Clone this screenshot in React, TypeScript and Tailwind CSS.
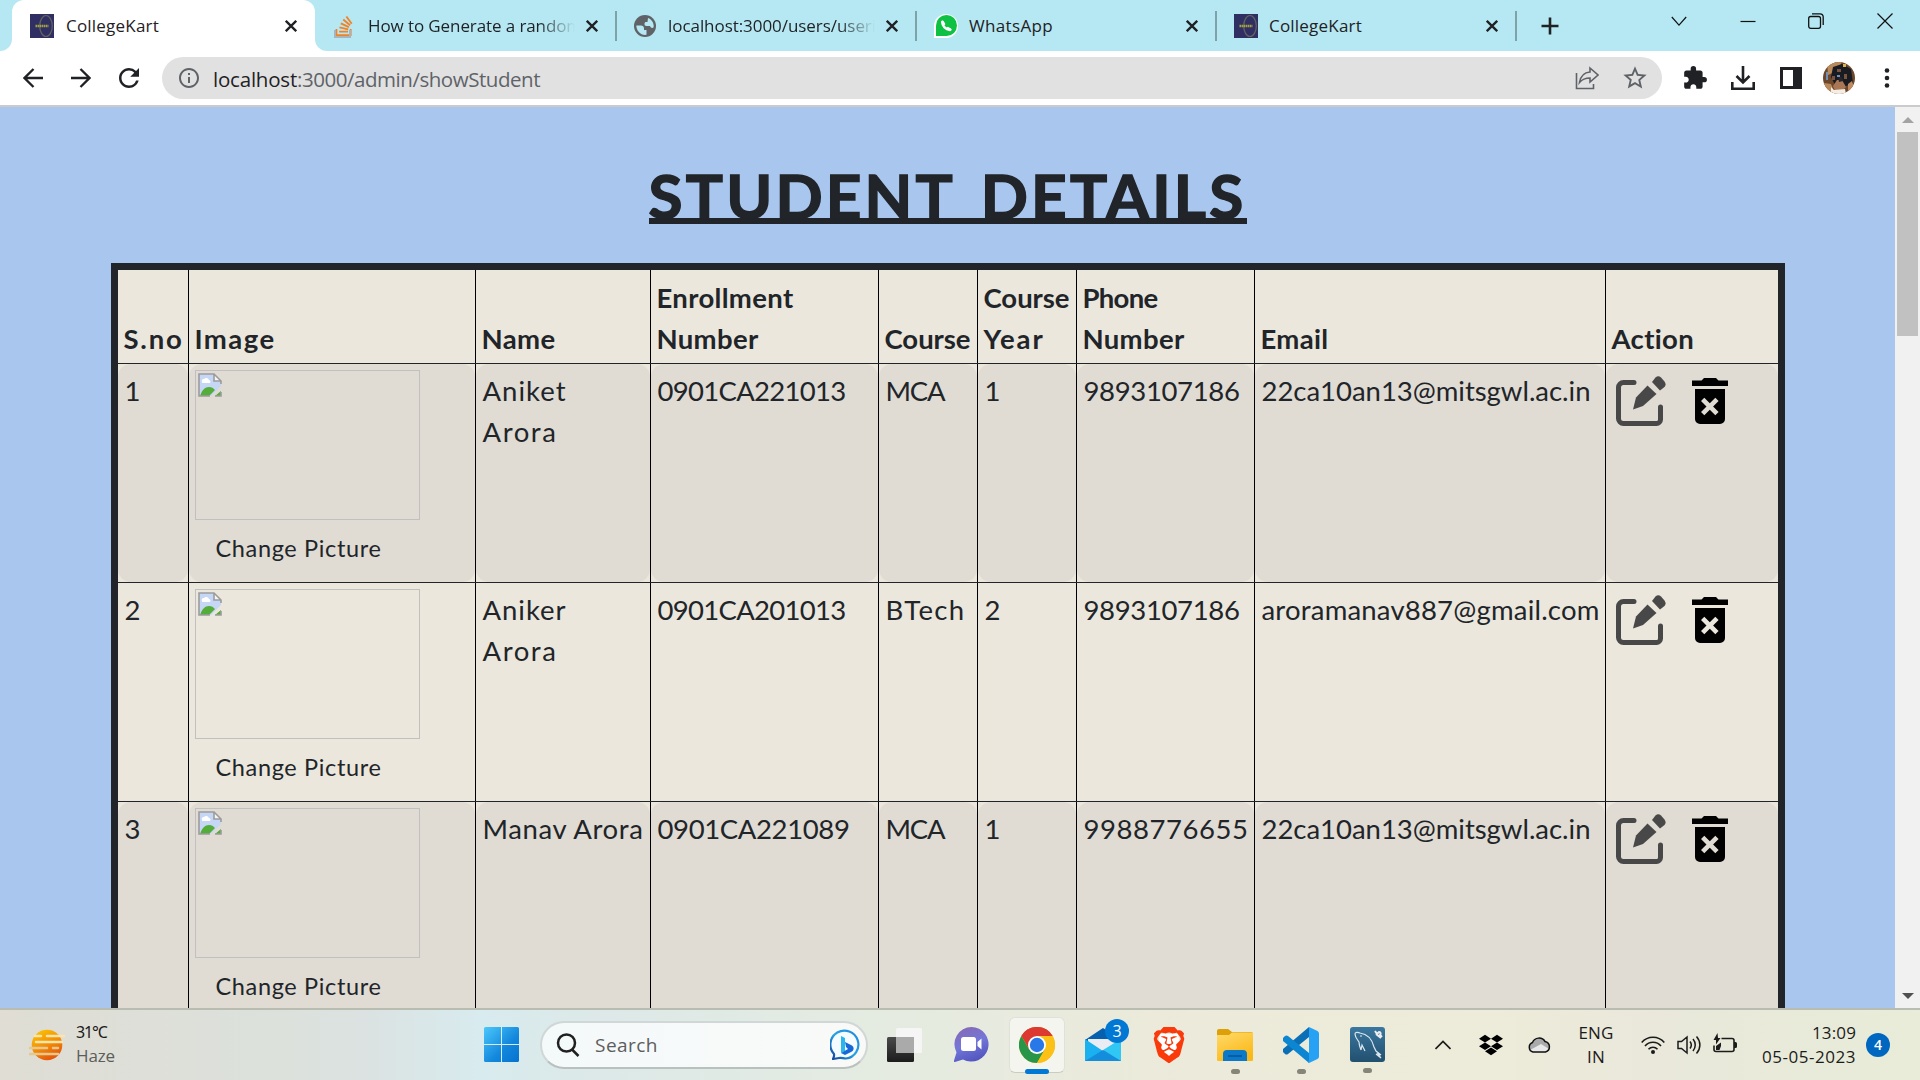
import { useLayoutEffect, useRef, useState } from "react";
import type { ReactNode } from "react";
import { SiBrave, SiDropbox, SiStackoverflow } from "react-icons/si";
import { FaWhatsapp } from "react-icons/fa";
import { MdExtension, MdInfoOutline, MdRefresh, MdStarBorder } from "react-icons/md";

/* Text whose letter spacing is adjusted so that the line has a given width. */
function Fit({ w, className = "", children }: { w: number; className?: string; children: ReactNode }) {
  const ref = useRef<HTMLSpanElement>(null);
  const [spacing, setSpacing] = useState(0);
  useLayoutEffect(() => {
    const el = ref.current;
    if (!el) return;
    el.style.letterSpacing = "0px";
    const natural = el.getBoundingClientRect().width;
    const count = (el.textContent || "x").length;
    const s = (w - natural) / count;
    el.style.letterSpacing = s + "px";
    setSpacing(s);
  }, [w]);
  return (
    <span ref={ref} className={"inline-block whitespace-pre " + className} style={{ letterSpacing: spacing }}>
      {children}
    </span>
  );
}

const Close = () => (
  <svg className="h-3 w-3 shrink-0" viewBox="0 0 12 12" stroke="#1f2124" strokeWidth="2.3">
    <path d="M.8.8 11.2 11.2M11.2.8.8 11.2" />
  </svg>
);

const KartIcon = () => (
  <svg className="h-6 w-6" viewBox="0 0 24 24">
    <rect width="24" height="24" fill="#2f2f63" />
    <ellipse cx="16" cy="12" rx="6.3" ry="10.5" fill="none" stroke="#65655f" strokeWidth="1.2" />
    <path d="M5.5 12h13" stroke="#a5a23e" strokeWidth="2.4" strokeDasharray="1.6 .5" />
  </svg>
);

const Globe = () => (
  <svg className="h-[22px] w-[22px]" viewBox="0 0 22 22">
    <circle cx="11" cy="11" r="11" fill="#5f6368" />
    <path d="M2.300 10.500h4.500c2 0 3.200 1 3.200 3v1.500h2.500v4.800c-5.500.8-10.200-3.800-10.200-9.300z" fill="#b5e8f2" />
    <path d="M14 2.900c3.500 1.300 5.700 4.600 5.700 8.100l-.2 1.500c-1 .8-3 .5-3.500-1.500h-3.500c-1.500 0-2-1-2-2.300 0-1.200.7-1.700 1.700-1.700h1.300z" fill="#b5e8f2" />
  </svg>
);

const WhatsApp = () => (
  <span className="flex h-6 w-6 items-center justify-center rounded-full rounded-bl-sm bg-white">
    <span className="flex h-[21px] w-[21px] items-center justify-center rounded-full rounded-bl-sm bg-[#0dc143]">
      <svg className="h-3 w-3" viewBox="0 0 12 12" fill="none" stroke="#fff" strokeWidth="2.600" strokeLinecap="round"><path d="M2.500 2c-.5 4 3.500 8 7.500 7.700" /><path d="m2.500 2 1.200 2M10 9.700 8 8.400" strokeWidth="3" /></svg>
    </span>
  </span>
);

const tabs = [
  { icon: <span className="relative block h-6 w-[20px]"><SiStackoverflow className="h-6 w-5 text-[#f48024]" /><span className="absolute bottom-0 left-0 h-[8px] w-[17px] border-2 border-t-0 border-[#a9b4ba]" /></span>, title: "How to Generate a random", w: 214, fade: true },
  { icon: <Globe />, title: "localhost:3000/users/useri", w: 208, fade: true },
  { icon: <WhatsApp />, title: "WhatsApp", w: 84, fade: false },
  { icon: <KartIcon />, title: "CollegeKart", w: 93, fade: false },
];

function TabStrip() {
  return (
    <div className="flex h-[51px] items-center bg-[#b5e8f2] text-[17px] text-[#1f2124]">
      <div className="flex h-full w-3 items-end">
        <div className="h-3 w-3 bg-white"><div className="h-3 w-3 rounded-br-xl bg-[#b5e8f2]" /></div>
      </div>
      <div className="flex h-full w-[303px] items-center rounded-t-xl bg-white pl-[18px]">
        <KartIcon />
        <div className="ml-3 w-[219px]"><Fit w={93}>CollegeKart</Fit></div>
        <Close />
      </div>
      <div className="flex h-full w-3 items-end">
        <div className="h-3 w-3 bg-white"><div className="h-3 w-3 rounded-bl-xl bg-[#b5e8f2]" /></div>
      </div>
      <div className="-ml-[10px] flex">
        {tabs.map((t, i) => (
          <div key={i} className="flex h-[30px] w-[300px] items-center border-r-2 border-[#7fa2a9] pl-[17px]">
            <div className="flex w-6 items-center">{t.icon}</div>
            <div className={t.fade ? "ml-[10px] w-[207px] overflow-hidden [mask-image:linear-gradient(to_right,black_82%,transparent)]" : "ml-[11px] w-[206px]"}>
              <Fit w={t.w}>{t.title}</Fit>
            </div>
            <div className="ml-[11px]"><Close /></div>
          </div>
        ))}
      </div>
      <svg className="ml-6 h-[18px] w-[18px]" viewBox="0 0 18 18" stroke="#1f2124" strokeWidth="2.6"><path d="M9 .5v17M.5 9h17" /></svg>
      <div className="mb-[10px] ml-[112px] flex flex-1 items-center justify-between pr-[27px]">
        <svg className="h-4 w-4" viewBox="0 0 16 16" fill="none" stroke="#111" strokeWidth="1.2"><path d="m.8 4 7.200 8.200L15.200 4" /></svg>
        <svg className="h-4 w-4" viewBox="0 0 16 16" stroke="#111" strokeWidth="1.2"><path d="M.5 8.500h15" /></svg>
        <svg className="h-4 w-4" viewBox="0 0 16 16" fill="none" stroke="#111" strokeWidth="1.3"><rect x=".7" y="3.500" width="11.800" height="11.800" rx="2" /><path d="M4 .8h8a3.200 3.200 0 0 1 3.200 3.200v8" /></svg>
        <svg className="h-4 w-4" viewBox="0 0 16 16" stroke="#111" strokeWidth="1.2"><path d="m.5.5 15 15M15.500.5l-15 15" /></svg>
      </div>
    </div>
  );
}

function Toolbar() {
  return (
    <div className="flex h-14 items-center border-b-2 border-[#c9cbcc] bg-white text-[#1f2124]">
      <svg className="ml-[23px] h-5 w-5" viewBox="0 0 20 20" fill="none" stroke="#1f2124" strokeWidth="2.300"><path d="M20 10H2M10.500 1 1.500 10l9 9" /></svg>
      <svg className="ml-7 h-5 w-5" viewBox="0 0 20 20" fill="none" stroke="#1f2124" strokeWidth="2.300"><path d="M0 10h18M9.500 1l9 9-9 9" /></svg>
      <MdRefresh className="ml-[23px] h-[30px] w-[30px]" />
      <div className="ml-[18px] flex h-[42px] w-[1500px] items-center rounded-full bg-[#e1e1e1]">
        <MdInfoOutline className="ml-[15px] h-6 w-6 text-[#5f6368]" />
        <div className="ml-3 flex-1 pt-[2px] text-[20.500px]">
          <Fit w={84}>localhost</Fit><Fit w={243} className="text-[#5f6368]">:3000/admin/showStudent</Fit>
        </div>
        <svg className="h-6 w-6" viewBox="0 0 24 24" fill="none" stroke="#5f6368" strokeWidth="1.600"><path d="M1.500 7v15.500h17V18M15 2l8 7-8 7v-4c-5 0-8 1.500-10.500 4.500C5.500 10.500 9 6.500 15 6z" /></svg>
        <MdStarBorder className="mr-[13px] ml-[22px] h-7 w-7 text-[#5f6368]" />
      </div>
      <MdExtension className="ml-5 h-[26px] w-[26px]" />
      <svg className="ml-[23px] h-6 w-6" viewBox="0 0 24 24" fill="none" stroke="#1f2124" strokeWidth="2.600"><path d="M12 0v16M5.500 10l6.500 6.500 6.500-6.500M1.300 16v6.700h21.400V16" /></svg>
      <svg className="ml-[25px] h-[22px] w-[22px]" viewBox="0 0 22 22"><path fill="#1f2124" fillRule="evenodd" d="M0 0h22v22H0zM3 3v16h10V3z" /></svg>
      <svg className="ml-[21px] h-8 w-8" viewBox="0 0 32 32">
        <defs><clipPath id="avatar"><circle cx="16" cy="16" r="16" /></clipPath></defs>
        <g clipPath="url(#avatar)">
          <path fill="#6d472c" d="M0 0h32v32H0z" /><path fill="#b98a5c" d="M4 0h15l-5 9-9 4zM1 21l7 1 4 10H5z" />
          <path fill="#191b23" d="M10 5 19 2l9 5 2 14-9 4-9-2-4-8z" /><path fill="#765440" d="M14 7h4v3h-4zM9 14h3v4H9zM21 12h3v5h-3z" />
          <path fill="#a97753" d="M14 18h5l4 7-4 4h-7l-2-5z" /><path fill="#262329" d="m15 14 4 1 1 4-4 1z" /><path fill="#f3ede6" d="m8 25 3 3 11-1 1 5H8z" /><path fill="#7390b7" d="M3 10h2v8H3zM14 13h3v2h-3z" />
          <path fill="#d7b44c" d="M20 2h3v3h-3z" /><path fill="#c08b60" d="m25 22 4-3 2 6-6 6z" />
        </g>
      </svg>
      <svg className="ml-[29px] h-5 w-[6px]" viewBox="0 0 6 20" fill="#1f2124"><circle cx="3" cy="2.500" r="2.300" /><circle cx="3" cy="10" r="2.300" /><circle cx="3" cy="17.500" r="2.300" /></svg>
    </div>
  );
}

const BrokenImage = () => (
  <svg className="mt-[2px] ml-[2px] h-6 w-6" viewBox="0 0 24 24">
    <path d="M1 1h15l7 7v5L13 23H1z" fill="#c5d7f5" />
    <path d="M4 9a2 2 0 0 1 2-3 3 3 0 0 1 5 1 2 2 0 0 1 1 3H4z" fill="#fff" />
    <path d="M2 23c2-6 5-9 9-9 3 0 4 1 6 3l-6 6zM17 23l6-5v5z" fill="#54ad39" />
    <path d="M16 1v7h7z" fill="#f5f5f5" />
    <path d="M12 23H1V1h15l7 7v3M16 1v7h7M17 23h6v-4" fill="none" stroke="#9c9c9c" strokeWidth="1.600" />
  </svg>
);

const EditIcon = () => (
  <svg className="h-[50px] w-[50px]" viewBox="0 0 50 50">
    <path d="M18 6.500H7.500a5 5 0 0 0-5 5v31a5 5 0 0 0 5 5h33a4 4 0 0 0 4-4V31" fill="none" stroke="#484848" strokeWidth="5" strokeLinecap="round" />
    <path d="m31.500 9.500 9 8.500-13.500 12-10 3.500 3-12z" fill="#484848" />
    <path d="m36 6 3.500-4.500a4 4 0 0 1 5.500 0l3.500 4a4.500 4.500 0 0 1 0 5.500L44 14.500z" fill="#484848" />
  </svg>
);

const TrashIcon = () => (
  <svg className="h-[46px] w-9" viewBox="0 0 36 46">
    <path d="M0 2.500h9.500L12 0h12l2.500 2.500H36V8H0z" />
    <path fillRule="evenodd" d="M3 11h30v30a5 5 0 0 1-5 5H8a5 5 0 0 1-5-5zM9 23l5.500 5.500L9 34l3.300 3.300 5.500-5.500 5.500 5.500 3.300-3.300-5.500-5.500 5.500-5.500-3.300-3.300-5.500 5.500-5.500-5.500z" />
  </svg>
);

const heads: [string, number][][] = [
  [["S.no", 60]], [["Image", 81]], [["Name", 74]], [["Enrollment", 137], ["Number", 102]], [["Course", 86]],
  [["Course", 86], ["Year", 61]], [["Phone", 75], ["Number", 102]], [["Email", 68]], [["Action", 83]],
];

type Student = { no: string; name: [string, number][]; roll: string; rw: number; course: string; cw: number; year: string; phone: string; pw: number; email: string; ew: number };

const students: Student[] = [
  { no: "1", name: [["Aniket", 84], ["Arora", 75]], roll: "0901CA221013", rw: 188, course: "MCA", cw: 59, year: "1", phone: "9893107186", pw: 156, email: "22ca10an13@mitsgwl.ac.in", ew: 329 },
  { no: "2", name: [["Aniker", 84], ["Arora", 75]], roll: "0901CA201013", rw: 188, course: "BTech", cw: 80, year: "2", phone: "9893107186", pw: 156, email: "aroramanav887@gmail.com", ew: 338 },
  { no: "3", name: [["Manav Arora", 161]], roll: "0901CA221089", rw: 192, course: "MCA", cw: 59, year: "1", phone: "9988776655", pw: 165, email: "22ca10an13@mitsgwl.ac.in", ew: 329 },
];

const COLS = "grid shrink-0 grid-cols-[71px_287px_175px_228px_99px_99px_178px_351px_172px]";

function Row({ s, shaded }: { s: Student; shaded: boolean }) {
  const cells: ReactNode[] = [
    s.no,
    <div>
      <div className="-ml-px h-[150px] w-[225px] border border-[#c0c0c0]"><BrokenImage /></div>
      <div className="mt-[9px] pl-5 text-[23.500px] leading-[38px]"><Fit w={166}>Change Picture</Fit></div>
    </div>,
    s.name.map(([t, w]) => <div key={t}><Fit w={w}>{t}</Fit></div>),
    <Fit w={s.rw}>{s.roll}</Fit>,
    <Fit w={s.cw}>{s.course}</Fit>,
    s.year,
    <Fit w={s.pw}>{s.phone}</Fit>,
    <Fit w={s.ew}>{s.email}</Fit>,
    <div className="flex items-center gap-[26px] pt-[6px] pl-[3px]"><EditIcon /><TrashIcon /></div>,
  ];
  return (
    <div className={COLS + " h-[219px] border-b border-[#212529]"}>
      {cells.map((c, i) => (
        <div key={i} className="border-r border-black last:border-r-0">
          <div className={shaded ? "h-full rounded-[13px] bg-[#e0dbd3] pt-[6px] pl-[7px]" : "h-full pt-[6px] pl-[7px]"}>{c}</div>
        </div>
      ))}
    </div>
  );
}

function Page() {
  return (
    <div className="flex h-[901px] overflow-hidden bg-[#a9c6ee]">
      <div className="flex w-[1895px] flex-col items-center overflow-hidden font-['Lato',sans-serif] text-[#212529]">
        <h1 className="mt-[50px] flex h-[106px] shrink-0 flex-col items-center text-[62px] leading-[76px] font-bold">
          <div className="h-[67px] border-b-[6px] border-[#212529]"><Fit w={598} className="[word-spacing:-5px] [-webkit-text-stroke:1.5px_#212529]">STUDENT  DETAILS</Fit></div>
        </h1>
        <div className="w-[1674px] shrink-0 border-[7px] border-[#212529] bg-[#ece7dc] text-[27.500px] leading-[41px]">
          <div className={COLS + " h-[94px] border-b border-[#212529] font-bold"}>
            {heads.map((h, i) => (
              <div key={i} className="flex flex-col justify-end border-r border-black pb-1 pl-[6px] last:border-r-0">
                {h.map(([t, w]) => <div key={t}><Fit w={w}>{t}</Fit></div>)}
              </div>
            ))}
          </div>
          {students.map((s, i) => <Row key={s.no} s={s} shaded={i % 2 === 0} />)}
        </div>
      </div>
      <div className="flex w-[25px] flex-col items-center bg-[#f1f1f1]">
        <svg className="mt-[10px] h-[6px] w-3" viewBox="0 0 12 6" fill="#a3a3a3"><path d="M0 6 6 0l6 6z" /></svg>
        <div className="mt-[9px] h-[204px] w-[21px] bg-[#c1c1c1]" />
        <svg className="mt-auto mb-[9px] h-[6px] w-3" viewBox="0 0 12 6" fill="#505050"><path d="m0 0 6 6 6-6z" /></svg>
      </div>
    </div>
  );
}

const Weather = () => (
  <svg className="h-9 w-9" viewBox="0 0 36 36">
    <defs><linearGradient id="sun" x1="0" y1="0" x2=".5" y2="1"><stop stopColor="#fccb04" /><stop offset=".6" stopColor="#f28c06" /><stop offset="1" stopColor="#e5590c" /></linearGradient></defs>
    <circle cx="18" cy="18" r="15.300" fill="url(#sun)" />
    <g stroke="#fbe5ad" strokeWidth="2.600" strokeLinecap="round"><path d="M6 9h6M18 9h17M7 15h26" /><path stroke="#e5c88d" d="M1 21h17M24 21h5M1 27h28" /></g>
  </svg>
);

const WindowsLogo = () => (
  <svg className="h-[35px] w-[35px]" viewBox="0 0 35 35">
    <defs><linearGradient id="win" x1="0" y1="0" x2="1" y2="1"><stop stopColor="#4cc8fb" /><stop offset=".6" stopColor="#1287dc" /><stop offset="1" stopColor="#0672cf" /></linearGradient></defs>
    <path fill="url(#win)" d="M1.500 0H17v17H0V1.500A1.500 1.500 0 0 1 1.500 0zM18 0h15.500A1.500 1.500 0 0 1 35 1.500V17H18zM0 18h17v17H1.500A1.500 1.500 0 0 1 0 33.500zM18 18h17v15.500a1.500 1.500 0 0 1-1.500 1.500H18z" />
  </svg>
);

const Bing = () => (
  <svg className="h-8 w-8" viewBox="0 0 32 32">
    <defs><linearGradient id="bing" x1="1" y1="0" x2="0" y2="1"><stop stopColor="#1f86dd" /><stop offset=".5" stopColor="#27a4e5" /><stop offset="1" stopColor="#123f9a" /></linearGradient></defs>
    <path d="M3 30c1-2 1.500-3 1-5A14 14 0 1 1 16 29.500c-3 0-4-1-7-.5z" fill="#f5fbff" stroke="url(#bing)" strokeWidth="2.200" strokeLinejoin="round" />
    <path d="m11 7 4 2v13l-4 2z" fill="#28b6ec" /><path d="m15 13 6 3c4 2 3 6 0 7l-6 3-4-2 7-4-2-2z" fill="#1668d8" />
  </svg>
);

const TaskView = () => (
  <svg className="h-9 w-9" viewBox="0 0 36 36">
    <defs><linearGradient id="tv" x2="0" y2="1"><stop stopColor="#4a4a4a" /><stop offset="1" stopColor="#1c1c1c" /></linearGradient></defs>
    <rect y="10" width="27" height="25" rx="1.500" fill="url(#tv)" /><rect x="9" y="1" width="26" height="25" rx="1.500" fill="#f5f5f5" /><path d="M9 10h18v16H9z" fill="#aaa" />
  </svg>
);

const Chat = () => (
  <svg className="h-[35px] w-[35px]" viewBox="0 0 35 35">
    <defs><linearGradient id="chat" x1=".2" x2=".6" y2="1"><stop stopColor="#8768b4" /><stop offset=".5" stopColor="#7377d8" /><stop offset="1" stopColor="#5054be" /></linearGradient></defs>
    <path d="M17.500 0A17.300 17.300 0 1 1 9 32.500L1 35q-1.500 0-1-1.500l2.500-8A17.300 17.300 0 0 1 17.500 0z" fill="url(#chat)" />
    <rect x="7" y="10" width="15" height="14" rx="2.500" fill="#fff" /><path d="m23.500 15 4-3.500v11L23.500 19z" fill="#fff" />
  </svg>
);

const Chrome = () => (
  <svg className="h-9 w-9" viewBox="0 0 36 36">
    <circle cx="18" cy="18" r="18" fill="#fbc116" />
    <path d="M18 18 2.400 9A18 18 0 0 1 33.600 9z" fill="#dc3a30" /><path d="M18 9h15.600A18 18 0 0 0 2.400 9l7.800 13.500z" fill="#dc3a30" />
    <path d="M25.800 22.500 18 36A18 18 0 0 1 2.400 9l7.800 13.500z" fill="#289648" /><path d="m18 18 7.800 4.500L18 36a18 18 0 0 0 15.600-27H18z" fill="#fbc116" />
    <circle cx="18" cy="18" r="9" fill="#fff" /><circle cx="18" cy="18" r="7.200" fill="#2878e8" />
  </svg>
);

const Mail = () => (
  <span className="relative block h-9 w-9">
    <svg className="h-9 w-9" viewBox="0 0 36 36">
      <path d="M0 13 18 1l18 12v3H0z" fill="#0760ad" /><path d="M3 12h30v8L18 26 3 18z" fill="#e9edf3" />
      <path d="m0 12 18 12L36 12v22H0z" fill="#1bb0ef" /><path d="M36 12v22L18 23z" fill="#30c7f4" /><path d="m0 34 18-11 18 11z" fill="#158ddd" />
    </svg>
    <span className="absolute -top-[8px] left-5 flex h-6 w-6 items-center justify-center rounded-full bg-[#0078d4] text-[16px] text-white">3</span>
  </span>
);

const Brave = () => (
  <span className="relative block h-9 w-9">
    <svg className="absolute h-9 w-9" viewBox="0 0 36 36"><path d="M9 7h18l2 12-6 10-5 4-5-4-6-10z" fill="#fff" /></svg>
    <SiBrave className="absolute h-9 w-9 text-[#fb3a0c]" />
  </span>
);

const Folder = () => (
  <svg className="h-9 w-9" viewBox="0 0 36 36">
    <defs><linearGradient id="fold" x2=".5" y2="1"><stop stopColor="#ffda6c" /><stop offset="1" stopColor="#fbb918" /></linearGradient></defs>
    <path d="M0 4a2 2 0 0 1 2-2h9l4 3h19a2 2 0 0 1 2 2v6H0z" fill="#dda006" /><path d="M0 8h12l3-2.500h21V33a1 1 0 0 1-1 1H1a1 1 0 0 1-1-1z" fill="url(#fold)" />
    <path d="M6 34v-7a4 4 0 0 1 4-4h16a4 4 0 0 1 4 4v7z" fill="#0c78c8" /><path d="M11 29h14" stroke="#07539a" strokeWidth="1.500" />
  </svg>
);

const VsCode = () => (
  <svg className="h-9 w-9" viewBox="0 0 36 36">
    <path d="M26 0v10L5 27q-1.500 1-3 0l-2-2q-1-1.500 0-3z" fill="#0b6fb5" /><path d="M5 9q-1.500-1-3 0l-2 2q-1 1.500 0 3l26 22V26z" fill="#0c86d0" />
    <path d="m26 0 8.500 4q1.500 1 1.500 2.500v23q0 1.500-1.500 2.500L26 36q-1.500 0 0-3z" fill="#26a1f3" />
  </svg>
);

const MySql = () => (
  <svg className="h-[35px] w-[35px]" viewBox="0 0 35 35">
    <defs><linearGradient id="sql" x2="0" y2="1"><stop stopColor="#3a779f" /><stop offset="1" stopColor="#22506f" /></linearGradient></defs>
    <rect width="35" height="35" rx="3" fill="url(#sql)" />
    <path d="M11 23c-1-3-2-5-2-8-2-3-4-5-4-8 0-2 3-2 5-1 7 1 12 6 14 14l2 4 5 4-3-1 3 4-5-4M11 23l1-5 3 6" fill="none" stroke="#dce8ef" strokeWidth="1.200" />
    <circle cx="11" cy="9" r=".8" fill="#fff" /><path d="m25 4 2 3 2-2c2 0 2 2 1 3l2 2M26 7l5 4" stroke="#eee" strokeWidth="2" fill="none" />
  </svg>
);

const apps: { icon: ReactNode; state: "none" | "open" | "active" }[] = [
  { icon: <TaskView />, state: "none" }, { icon: <Chat />, state: "none" }, { icon: <Chrome />, state: "active" }, { icon: <Mail />, state: "none" },
  { icon: <Brave />, state: "none" }, { icon: <Folder />, state: "open" }, { icon: <VsCode />, state: "open" }, { icon: <MySql />, state: "open" },
];

function Taskbar() {
  return (
    <div className="flex h-[72px] items-center border-t-2 border-[#b9bcb0] bg-[linear-gradient(90deg,#dfddd4_0%,#dce1dc_15%,#dbe2e1_19%,#d8ebee_25%,#dce9e9_30%,#e4ebe1_45%,#eceada_62%,#edebd9_78%,#e9e8db_86%,#e8ecd8_100%)] pb-px text-[17px] leading-6 text-[#1b1b1b]">
      <div className="flex w-[468px] items-center pl-[29px]">
        <Weather />
        <div className="ml-[11px] flex flex-col pb-px"><Fit w={35} className="font-['Noto_Sans',sans-serif] text-[16px]">31°C</Fit><Fit w={39} className="text-[#5d5d5b]">Haze</Fit></div>
      </div>
      <div className="flex w-[66px] justify-center"><WindowsLogo /></div>
      <div className="ml-[6px] flex h-12 w-[328px] items-center rounded-full border-2 border-[#d0d7d6] border-b-[#b9c1be] bg-[linear-gradient(90deg,#f4f9fa,#f9faf8)] pr-[4px] pl-[14px]">
        <svg className="h-6 w-6" viewBox="0 0 24 24" fill="none" stroke="#202020" strokeWidth="2.500"><circle cx="10.500" cy="10" r="8.500" /><path d="m16 16.500 6.500 6.500" /></svg>
        <div className="ml-[15px] flex-1 text-[19px] text-[#5d5d5d]"><Fit w={63}>Search</Fit></div>
        <Bing />
      </div>
      <div className="ml-1 flex">
        {apps.map((a, i) => (
          <div key={i} className={a.state === "active" ? "mx-[5px] flex h-14 w-14 flex-col items-center rounded-md border border-[#dfe2d9] border-b-[#c9ccc2] bg-[#f4f5ee] pt-[9px]" : "flex h-14 w-[66px] flex-col items-center pt-[10px]"}>
            <div className="flex h-9 items-center">{a.icon}</div>
            {a.state === "active" && <div className="mt-[6px] h-[5px] w-6 shrink-0 rounded-full bg-[#0078d4]" />}
            {a.state === "open" && <div className="mt-[6px] h-[5px] w-[9px] shrink-0 rounded-full bg-[#858578]" />}
          </div>
        ))}
      </div>
      <svg className="ml-[35px] h-4 w-4" viewBox="0 0 16 16" fill="none" stroke="#1b1b1b" strokeWidth="1.700"><path d="m.5 12 7.500-7.500 7.500 7.500" /></svg>
      <SiDropbox className="ml-[28px] h-6 w-6 text-black" />
      <svg className="ml-6 h-[17px] w-6" viewBox="0 0 24 17"><path d="M6 16a5 5 0 0 1-.5-9.500 7 7 0 0 1 12.500-1A5.400 5.400 0 0 1 18.500 16z" fill="#aaa" /><path d="m3 14 11-6 8 5-3 3H5z" fill="#e8e8e8" /><path d="M6 16a5 5 0 0 1-.5-9.500 7 7 0 0 1 12.500-1A5.400 5.400 0 0 1 18.500 16z" fill="none" stroke="#111" strokeWidth="1.500" /></svg>
      <div className="ml-[27px] flex w-[36px] flex-col items-center"><Fit w={35}>ENG</Fit><Fit w={18}>IN</Fit></div>
      <svg className="ml-[27px] h-6 w-6" viewBox="0 0 24 24" fill="none" stroke="#1b1b1b" strokeWidth="1.600"><path d="M.7 9.500c6-7 16.600-7 22.600 0M4 13c4.300-5 11.700-5 16 0M7.500 16.300c2.500-2.800 6.500-2.800 9 0" /><circle cx="12" cy="19" r="2" fill="#1b1b1b" stroke="none" /></svg>
      <svg className="ml-3 h-6 w-6" viewBox="0 0 24 24" fill="none" stroke="#1b1b1b" strokeWidth="1.500"><path d="M1 8.500h3.500L10 4v16l-5.500-4.500H1zM13 8.500c1.500 2 1.500 5 0 7M16 6c3 3.500 3 8.500 0 12M19.500 3.500c4.500 5 4.500 12 0 17" /></svg>
      <svg className="ml-3 h-6 w-6" viewBox="0 0 24 24" fill="none" stroke="#1b1b1b" strokeWidth="1.600"><path d="M8.500 5.500h10.500a2 2 0 0 1 2 2v9a2 2 0 0 1-2 2H3a2 2 0 0 1-2-2v-4" /><path d="M21 9h1.500q1.500 0 1.500 1.500v3q0 1.500-1.500 1.500H21zM4.500 0 .500 7h2.500v4.500L7.500 5H5zM3 17v-4l5-3.500V13l-1.500 4z" fill="#1b1b1b" stroke="none" /></svg>
      <div className="ml-6 flex w-[95px] flex-col items-end"><Fit w={44}>13:09</Fit><Fit w={94}>05-05-2023</Fit></div>
      <div className="ml-[10px] flex h-6 w-6 items-center justify-center rounded-full bg-[#0067c0] text-sm font-semibold text-white">4</div>
    </div>
  );
}

export default function App() {
  return (
    <div className="h-[1080px] w-[1920px] overflow-hidden font-['Open_Sans',sans-serif]">
      <TabStrip />
      <Toolbar />
      <Page />
      <Taskbar />
    </div>
  );
}
